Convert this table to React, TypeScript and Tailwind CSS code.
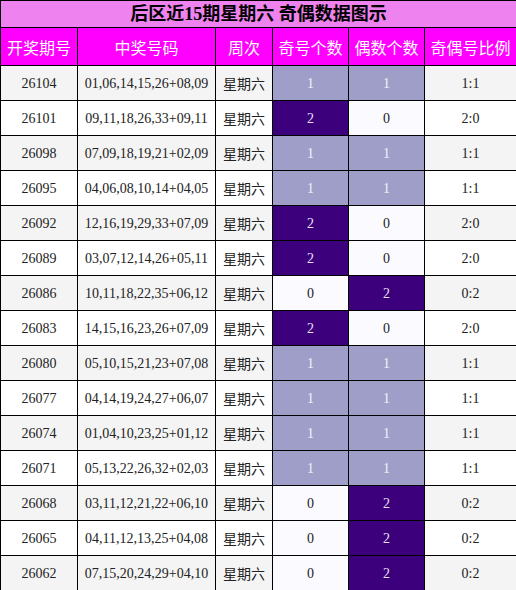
import React from 'react';

const rows: [string, string, number, number][] = [
  ['26104', '01,06,14,15,26+08,09', 1, 1],
  ['26101', '09,11,18,26,33+09,11', 2, 0],
  ['26098', '07,09,18,19,21+02,09', 1, 1],
  ['26095', '04,06,08,10,14+04,05', 1, 1],
  ['26092', '12,16,19,29,33+07,09', 2, 0],
  ['26089', '03,07,12,14,26+05,11', 2, 0],
  ['26086', '10,11,18,22,35+06,12', 0, 2],
  ['26083', '14,15,16,23,26+07,09', 2, 0],
  ['26080', '05,10,15,21,23+07,08', 1, 1],
  ['26077', '04,14,19,24,27+06,07', 1, 1],
  ['26074', '01,04,10,23,25+01,12', 1, 1],
  ['26071', '05,13,22,26,32+02,03', 1, 1],
  ['26068', '03,11,12,21,22+06,10', 0, 2],
  ['26065', '04,11,12,13,25+04,08', 0, 2],
  ['26062', '07,15,20,24,29+04,10', 0, 2],
];

const serif = "font-['Liberation_Serif','Noto_Sans_CJK_SC',serif]";
const cjk = "font-['Noto_Sans_CJK_SC','Noto_Sans',sans-serif]";

const countCell = (n: number) => {
  if (n === 2) return 'bg-[#3d007d] text-[#e8e0f4]';
  if (n === 1) return 'bg-[#9e9ec8] text-[#f2f2f8]';
  return 'bg-[#fbfbff] text-[#222]';
};

const App = () => {
  return (
    <div className="w-[516px] h-[590px] bg-white overflow-hidden">
      <table className="w-[516px] border-collapse table-fixed">
        <colgroup>
          <col className="w-[77px]" />
          <col className="w-[138px]" />
          <col className="w-[57px]" />
          <col className="w-[76px]" />
          <col className="w-[76px]" />
          <col className="w-[92px]" />
        </colgroup>
        <thead>
          <tr className="h-[27px]">
            <th
              colSpan={6}
              className={`border border-black bg-[#ee82ee] text-[18px] font-bold text-black ${serif} leading-none`}
            >
              后区近15期星期六 奇偶数据图示
            </th>
          </tr>
          <tr className="h-[38px] bg-[#ff00ff]">
            {['开奖期号', '中奖号码', '周次', '奇号个数', '偶数个数', '奇偶号比例'].map((h) => (
              <th key={h} className={`border border-black text-white font-normal text-[16px] ${cjk}`}>
                {h}
              </th>
            ))}
          </tr>
        </thead>
        <tbody>
          {rows.map(([issue, nums, odd, even], i) => {
            const bg = i % 2 === 0 ? 'bg-[#f4f4f4]' : 'bg-white';
            return (
              <tr key={issue} className={`h-[35px] ${bg} text-[14px] text-[#222]`}>
                <td className={`border border-black text-center ${serif}`}>{issue}</td>
                <td className={`border border-black text-center ${serif}`}>{nums}</td>
                <td className={`border border-black text-center ${cjk}`}>星期六</td>
                <td className={`border border-black text-center ${serif} ${countCell(odd)}`}>{odd}</td>
                <td className={`border border-black text-center ${serif} ${countCell(even)}`}>{even}</td>
                <td className={`border border-black text-center ${serif}`}>
                  {odd}:{even}
                </td>
              </tr>
            );
          })}
        </tbody>
      </table>
    </div>
  );
};

export default App;
